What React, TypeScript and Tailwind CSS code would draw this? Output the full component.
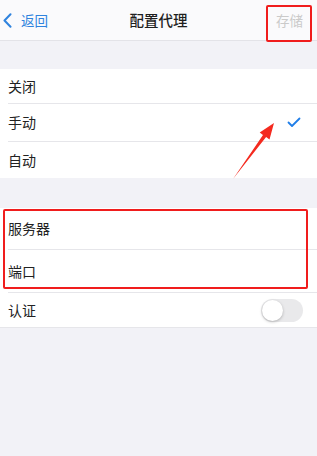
const font = { fontFamily: '"Noto Sans CJK SC", "Noto Sans", sans-serif' };

function Check() {
  return (
    <svg width="14" height="11" viewBox="0 0 14 11" fill="none" className="mr-[2px]">
      <path d="M1.5 5.5L5 9L12.5 1.5" stroke="#1f7ee8" strokeWidth="1.8" strokeLinecap="round" strokeLinejoin="round" />
    </svg>
  );
}

function Row({ label, h, sep = true, children }: { label: string; h: string; sep?: boolean; children?: React.ReactNode }) {
  return (
    <div className={`flex items-center pl-2 ${h}`}>
      <div className={`flex h-full flex-1 items-center justify-between pr-[14px] ${sep ? 'border-b border-[#e6e6ea]' : ''}`}>
        <span className="text-[14px] text-[#222]">{label}</span>
        {children}
      </div>
    </div>
  );
}

export default function App() {
  return (
    <div className="relative h-[456px] w-full overflow-hidden bg-[#f2f2f7]" style={font}>
      {/* nav bar */}
      <div className="flex h-[41px] items-center justify-between border-b border-[#e3e3e8] bg-[#fafafc] px-[3px]">
        <div className="flex w-[90px] items-center gap-[9px] text-[#2f83de]">
          <svg width="9" height="15" viewBox="0 0 9 15" fill="none">
            <path d="M7.5 1.2L1.5 7.5L7.5 13.8" stroke="#2f83de" strokeWidth="2" strokeLinecap="round" strokeLinejoin="round" />
          </svg>
          <span className="text-[13.5px]">返回</span>
        </div>
        <span className="text-[14.5px] font-medium text-[#1f1f1f]">配置代理</span>
        <div className="flex w-[90px] justify-end pr-[11px]">
          <span className="text-[13.5px] text-[#cacaca]">存储</span>
        </div>
      </div>

      {/* mode section */}
      <div className="mt-[28px] bg-white">
        <Row label="关闭" h="h-[35px]" />
        <Row label="手动" h="h-[38px]">
          <Check />
        </Row>
        <Row label="自动" h="h-[36px]" sep={false} />
      </div>

      {/* server section */}
      <div className="mt-[30px] border-b border-[#e6e6ea] bg-white">
        <Row label="服务器" h="h-[42px]" />
        <Row label="端口" h="h-[43px]" />
        <Row label="认证" h="h-[34px]" sep={false}>
          <div className="relative h-[23px] w-[42px] rounded-full bg-[#e9e9eb]">
            <div className="absolute left-[1px] top-[1px] h-[21px] w-[21px] rounded-full bg-white shadow-[0_1px_3px_rgba(0,0,0,0.25)]" />
          </div>
        </Row>
      </div>

      {/* annotations */}
      <div className="absolute left-[266px] top-[5px] h-[37px] w-[46px] rounded-[2px] border-2 border-[#f01d1d]" />
      <div className="absolute left-[3px] top-[209px] h-[80px] w-[305px] rounded-[2px] border-2 border-[#f01d1d]" />
      <svg className="absolute left-0 top-0" width="317" height="456" viewBox="0 0 317 456">
        <path d="M233 179 L263 135 L259.7 132.5 L274 123 L269.5 139.5 L266.1 137.1 Z" fill="#f42a1f" />
      </svg>
    </div>
  );
}
